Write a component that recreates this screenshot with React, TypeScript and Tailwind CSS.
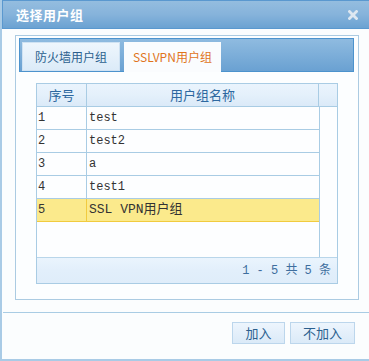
import React from "react";

const rows = [
  { id: "1", name: "test" },
  { id: "2", name: "test2" },
  { id: "3", name: "a" },
  { id: "4", name: "test1" },
  { id: "5", name: "SSL VPN用户组" },
];

const cjk = "font-['SimSun','Noto_Sans_CJK_SC',sans-serif]";
const mono = "font-['Liberation_Mono','Noto_Sans_CJK_SC',monospace]";

const App = () => {
  return (
    <div className={`w-[369px] h-[361px] bg-white overflow-hidden ${cjk}`}>
      <div className="h-[361px] w-[380px] border-l-2 border-b-2 border-[#a9cbe6] bg-[#fbfdfe] flex flex-col">
        {/* title bar */}
        <div className="h-[29px] border border-[#5a98cf] bg-gradient-to-b from-[#94bddf] via-[#86b3db] to-[#6ba2d2] flex items-center justify-between pl-[13px] pr-[21px]">
          <span className="text-[13px] font-bold text-white tracking-[0.5px]">选择用户组</span>
          <svg width="10" height="10" viewBox="0 0 10 10">
            <path d="M1.5 1.5 L8.5 8.5 M8.5 1.5 L1.5 8.5" stroke="#dde7f1" strokeWidth="2.8" strokeLinecap="square" />
          </svg>
        </div>

        {/* panel */}
        <div className="ml-[13px] mt-[6px] w-[344px] h-[265px] border border-[#abcbe2] bg-[#fcfeff] pt-[2px] pl-[3px]">
          {/* tabs */}
          <div className="w-[335px] h-[34px] border border-[#4c93cd] bg-gradient-to-b from-[#8fbbe0] to-[#6aa1d2] flex items-end gap-[4px] pl-[2px]">
            <div className="w-[98px] h-[29px] border border-[#cfe2f3] bg-gradient-to-b from-[#eef6fd] to-[#dcebf8] flex items-center justify-center text-[12px] text-[#2b5f8e]">
              防火墙用户组
            </div>
            <div className="w-[97px] h-[30px] -mb-[1px] bg-[#fafcfe] flex items-center justify-center text-[12px] text-[#e0741c]">
              SSLVPN用户组
            </div>
          </div>

          {/* table */}
          <div className="ml-[17px] mt-[11px] w-[302px] h-[201px] border border-[#a9cce4] bg-[#fdfeff] flex flex-col">
            <div className="h-[23px] flex border-b border-[#a9cce4] bg-gradient-to-b from-[#eaf4fd] via-[#e4f0fb] to-[#dbeaf8] text-[13px] text-[#2d68a0]">
              <div className="w-[50px] border-r border-[#a9cce4] flex items-center justify-center">序号</div>
              <div className="w-[232px] border-r border-[#a9cce4] flex items-center justify-center">用户组名称</div>
              <div className="flex-1" />
            </div>
            <div className="flex-1 flex">
              <div className="w-[283px] border-r border-[#a9cce4]">
                {rows.map((r, i) => {
                  const sel = i === rows.length - 1;
                  return (
                    <div
                      key={r.id}
                      className={`h-[23px] flex border-b ${sel ? "bg-[#fbea8c] border-[#f1cb3f]" : "border-[#a9cce4]"}`}
                    >
                      <div className={`w-[50px] border-r ${sel ? "border-[#f1cb3f]" : "border-[#a9cce4]"} flex items-center pl-[1px] text-[12px] text-[#333] ${mono}`}>
                        {r.id}
                      </div>
                      <div className={`flex-1 flex items-center pl-[2px] text-[#333] ${sel ? "text-[13px]" : "text-[12px]"} ${mono}`}>
                        {r.name}
                      </div>
                    </div>
                  );
                })}
              </div>
              <div className="flex-1" />
            </div>
            <div className={`h-[26px] border-t border-[#b9d6ea] bg-gradient-to-b from-[#eaf4fd] via-[#e2effb] to-[#dfedfa] flex items-center justify-end pr-[6px] text-[12px] text-[#3e6e9e] whitespace-pre ${mono}`}>
              {"1 - 5 共 5 条"}
            </div>
          </div>
        </div>

        {/* separator */}
        <div className="mt-[12px] ml-[1px] border-t border-[#a9cce4]" />

        {/* buttons */}
        <div className="w-[367px] mt-[9px] flex justify-end gap-[5px] pr-[14px]">
          <button className="w-[53px] h-[22px] border border-[#bcd6ec] bg-gradient-to-b from-[#edf5fd] to-[#dbeaf8] text-[13px] text-[#2b5f8e] flex items-center justify-center">
            加入
          </button>
          <button className="w-[65px] h-[22px] border border-[#bcd6ec] bg-gradient-to-b from-[#edf5fd] to-[#dbeaf8] text-[13px] text-[#2b5f8e] flex items-center justify-center">
            不加入
          </button>
        </div>
      </div>
    </div>
  );
};

export default App;
